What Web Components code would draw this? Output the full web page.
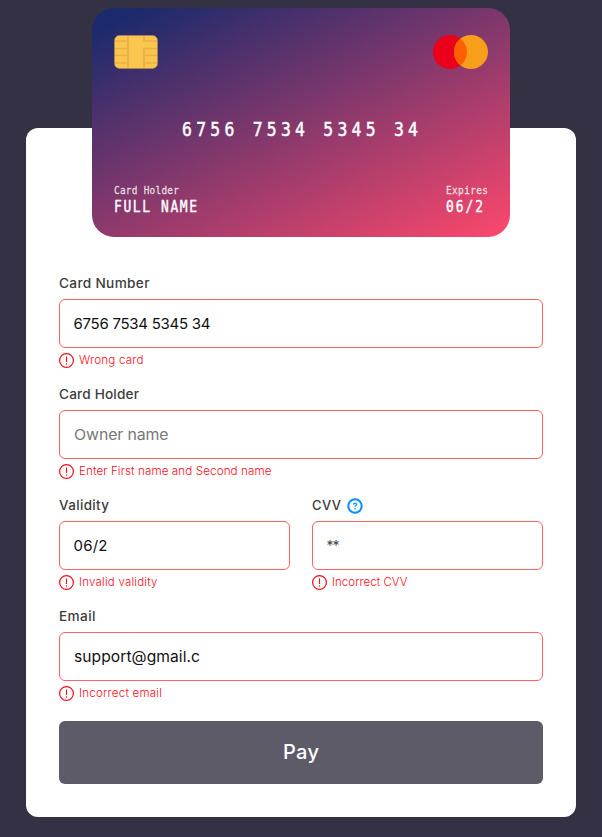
<!DOCTYPE html>
<html lang="en"><head><meta charset="utf-8"><title>Card payment</title>
<style>html,body{margin:0;height:100%;background:#353144;overflow:hidden}</style></head>
<body><pay-page></pay-page>
<script>
const define=(name,html,Base=HTMLElement)=>{
  const t=document.createElement('template');t.innerHTML=html;
  customElements.define(name,class extends Base{
    constructor(){super();this.attachShadow({mode:'open'}).append(t.content.cloneNode(true));}
  });
};
/* One line of text set to a given width: by tracking, after scaling the glyphs by "squeeze". */
class FitText extends HTMLElement{
  connectedCallback(){
    const s=this.shadowRoot.querySelector('span');
    const target=+this.getAttribute('w'),n=this.textContent.length;
    const sq=+this.getAttribute('squeeze')||1;
    s.style.transform=sq===1?'none':`scaleX(${sq})`;
    const natural=s.getBoundingClientRect().width/sq;
    if(target&&n>1)s.style.letterSpacing=((target/sq-natural)/(n-1))+'px';
    this.style.width=target+'px';
  }
}
define('fit-text',`<style>:host{display:block;white-space:pre}span{display:inline-block;transform-origin:0 50%}</style><span><slot></slot></span>`,FitText);

define('card-chip',`<style>:host{display:block;width:44px;height:34px}svg{display:block}</style>
<svg width="44" height="34" viewBox="0 0 44 34"><rect x=".5" y=".5" width="43" height="33" rx="5" fill="#fac74e" stroke="#b58a5d" stroke-opacity=".75" stroke-width=".8"/>
<g fill="none" stroke="#eead47" stroke-width="1.600"><path d="M14 1v32M30 33V13.500H43M30 1v5H43M1 6h13M1 13.500h13M1 20.500h13M1 28h13M30 20.500h13M30 28h13"/></g></svg>`);
define('card-brand',`<style>:host{display:block;margin-right:-1px}svg{display:block}</style>
<svg width="56" height="34" viewBox="0 0 56 34"><circle cx="17" cy="17" r="17" fill="#eb001b"/><circle cx="38" cy="17" r="17" fill="#f79e1b"/><path d="M27.500 3.630a17 17 0 0 1 0 26.740a17 17 0 0 1 0-26.740z" fill="#ff5f00"/></svg>`);
define('alert-icon',`<style>:host{display:block;width:15px;height:15px}svg{display:block}</style>
<svg width="15" height="15" viewBox="0 0 15 15"><circle cx="7.500" cy="7.500" r="6.900" fill="none" stroke="#fb0a14" stroke-width="1.200"/><path d="M7.500 3.500v5.500" stroke="#fb0a14" stroke-width="1.100"/><circle cx="7.500" cy="10.900" r=".75" fill="#fb0a14"/></svg>`);
define('help-icon',`<style>:host{display:block;width:16px;height:16px;margin-top:2px}svg{display:block}</style>
<svg width="16" height="16" viewBox="0 0 16 16"><circle cx="8" cy="8" r="6.700" fill="none" stroke="#0a8efc" stroke-width="2"/><path d="M6.400 6.600c.1-2 3.300-1.800 3.200-.1 0 1.100-1.600 1.100-1.600 2.300" fill="none" stroke="#0a8efc" stroke-width="1.300"/><circle cx="8" cy="10.700" r=".8" fill="#0a8efc"/></svg>`);

define('bank-card',`<style>
:host{box-sizing:border-box;display:flex;flex-direction:column;width:418px;height:229px;border-radius:22px;padding:27px 22px 20px;color:#fff;
background:linear-gradient(155deg,#1a2a6c 5%,#fd486c 100%);font-family:"DejaVu Sans Mono",monospace}
.row{display:flex;justify-content:space-between}
.number{font-size:20px;line-height:28px;margin:46px 0 0 68px;-webkit-text-stroke:.5px #fff}
.bottom{margin-top:auto}
.cap{font-size:10.500px;line-height:14px;color:#ffffffc0;-webkit-text-stroke:.3px #ffffffc0}
.val{font-size:15px;line-height:21px;height:20px;-webkit-text-stroke:.4px #fff}
</style><div class="row"><card-chip></card-chip><card-brand></card-brand></div>
<fit-text class="number" w="236" squeeze=".82">6756 7534 5345 34</fit-text>
<div class="row bottom"><div><fit-text class="cap" w="65" squeeze=".9">Card Holder</fit-text><fit-text class="val" w="83" squeeze=".86">FULL NAME</fit-text></div>
<div><fit-text class="cap" w="42" squeeze=".9">Expires</fit-text><fit-text class="val" w="37" squeeze=".86">06/2</fit-text></div></div>`);

define('form-field',`<style>
:host{display:flex;flex-direction:column;height:111px;flex:1;min-width:0}
.label{display:flex;gap:6px;align-items:center;height:20px;margin-bottom:6px;font-size:13px;font-weight:450;color:#3c3c3c}
.box{box-sizing:border-box;height:49px;border:1px solid #fd625f;border-radius:6px;padding:0 13.500px 1px;display:flex;align-items:center;font-size:15px;color:#111}
.error{display:flex;gap:5px;align-items:center;height:17px;margin-top:4px;font-size:11px;color:#ff0a1c}
::slotted(fit-text[slot=error]){margin-top:-1px;font-weight:350}
</style><div class="label"><slot name="label"></slot></div><div class="box"><slot></slot></div>
<div class="error"><alert-icon></alert-icon><slot name="error"></slot></div>`);

define('pay-button',`<style>:host{box-sizing:border-box;display:flex;height:63px;padding-bottom:2px;border-radius:6px;background:#5e5b69;color:#fff;font-size:20px;font-weight:450;align-items:center;justify-content:center}</style><slot></slot>`);

define('pay-page',`<style>
:host{display:flex;flex-direction:column;align-items:center;padding-top:8px;font-family:Inter,"Open Sans",sans-serif}
bank-card{position:relative;z-index:1;margin-bottom:-109px}
main{box-sizing:border-box;width:550px;height:689px;background:#fff;border-radius:12px;padding:145px 33px 33px}
.pair{display:flex;gap:22px}
.ph{color:#777}
.stars{font-size:14px;color:#444}
pay-button{margin-top:4px}
</style><bank-card></bank-card><main>
<form-field><fit-text slot="label" w="90.500" squeeze="1.050">Card Number</fit-text><fit-text w="137">6756 7534 5345 34</fit-text><fit-text slot="error" w="64.500" squeeze="1.060">Wrong card</fit-text></form-field>
<form-field><fit-text slot="label" w="80" squeeze="1.050">Card Holder</fit-text><fit-text class="ph" w="94.500" squeeze="1.060">Owner name</fit-text><fit-text slot="error" w="192.500" squeeze="1.060">Enter First name and Second name</fit-text></form-field>
<div class="pair">
<form-field><fit-text slot="label" w="50" squeeze="1.030">Validity</fit-text><fit-text w="34">06/2</fit-text><fit-text slot="error" w="78.500" squeeze="1.040">Invalid validity</fit-text></form-field>
<form-field><fit-text slot="label" w="29">CVV</fit-text><help-icon slot="label"></help-icon><fit-text class="stars" w="13">**</fit-text><fit-text slot="error" w="75.500" squeeze="1.040">Incorrect CVV</fit-text></form-field></div>
<form-field><fit-text slot="label" w="36.500" squeeze="1.050">Email</fit-text><fit-text w="126" squeeze="1.040">support@gmail.c</fit-text><fit-text slot="error" w="83" squeeze="1.050">Incorrect email</fit-text></form-field>
<pay-button><fit-text w="36">Pay</fit-text></pay-button></main>`);
</script></body></html>
